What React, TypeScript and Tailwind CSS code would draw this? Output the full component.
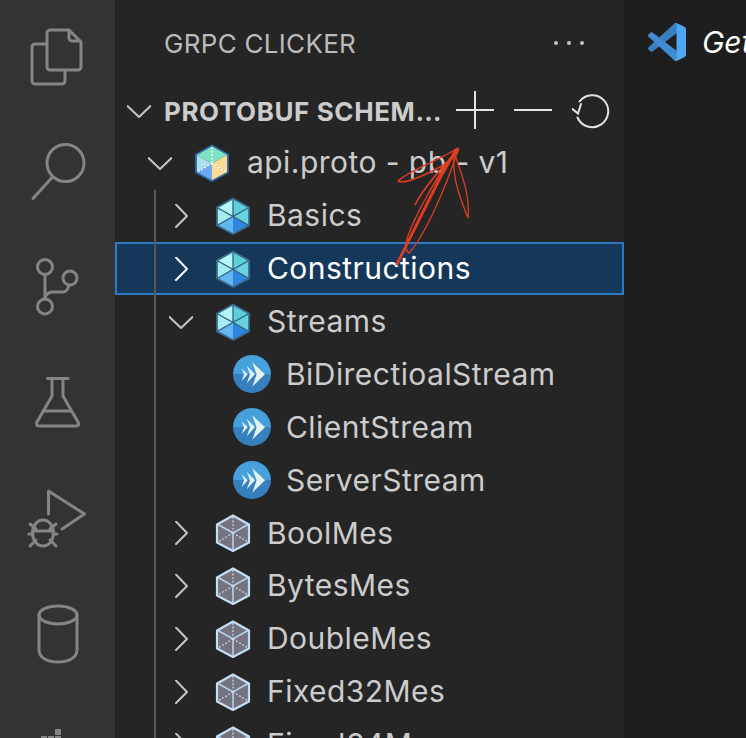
import React from "react";

const A = "#858585";

function ActivityIcon({ y, children }: { y: number; children: React.ReactNode }) {
  return (
    <div className="h-[116px] w-[115px] shrink-0">
      <svg width="115" height="116" viewBox={`0 ${y} 115 116`} fill="none" stroke={A} strokeWidth="3" strokeLinejoin="round" strokeLinecap="round">
        {children}
      </svg>
    </div>
  );
}

function ActivityBar() {
  return (
    <div className="flex w-[115px] shrink-0 flex-col bg-[#333333]">
      <ActivityIcon y={0}>
        <path d="M50 30H69L81 42V67a3 3 0 0 1-3 3H50a3 3 0 0 1-3-3V33a3 3 0 0 1 3-3z" />
        <path d="M69 30V38a3 3 0 0 0 3 3H80" strokeWidth="3" />
        <path d="M47 44H35a3 3 0 0 0-3 3V81a3 3 0 0 0 3 3H62a3 3 0 0 0 3-3V71" />
      </ActivityIcon>
      <ActivityIcon y={116}>
        <circle cx="65.5" cy="163" r="18.5" />
        <path d="M33 198.500L52 177.500" />
      </ActivityIcon>
      <ActivityIcon y={232}>
        <circle cx="45" cy="267" r="7.500" />
        <circle cx="45" cy="306.500" r="7.500" />
        <circle cx="70" cy="278" r="7" />
        <path d="M45 275V299" />
        <path d="M45 298c1-4 4-6 8-6h10c3 0 5-3 6-7" />
      </ActivityIcon>
      <ActivityIcon y={348}>
        <path d="M47.500 378.500H68" />
        <path d="M52 379V396L37 422Q35.500 426 39 426H76Q80 426 78 422L63 396V379" />
        <path d="M44 411H71" />
      </ActivityIcon>
      <ActivityIcon y={464}>
        <path d="M48.500 514V491L84.500 514L62 529" />
        <ellipse cx="43" cy="533" rx="10.500" ry="13" />
        <path d="M33 531H53" />
        <path d="M30 524L36 529M56 524L50 529M29 534H33M57 534H53M30 546L36 540M56 546L50 540" />
      </ActivityIcon>
      <ActivityIcon y={580}>
        <ellipse cx="58" cy="615" rx="19" ry="9" />
        <path d="M39 615V650C39 658 48 662 58 662S77 658 77 650V615" />
      </ActivityIcon>
      <ActivityIcon y={696}>
        <g fill={A} stroke="none">
          <rect x="55" y="729" width="6" height="6" />
          <rect x="41" y="736" width="6" height="6" />
          <rect x="48" y="736" width="6" height="6" />
          <rect x="55" y="736" width="6" height="6" />
        </g>
      </ActivityIcon>
    </div>
  );
}

function Chevron({ open, color = "#c5c5c5" }: { open?: boolean; color?: string }) {
  return (
    <svg width="24" height="24" viewBox="0 0 24 24" fill="none" stroke={color} strokeWidth="2" strokeLinecap="round" strokeLinejoin="round" className="shrink-0">
      {open ? <path d="M0.500 7L12 18L23.500 7" /> : <path d="M7 0.500L18 12L7 23" />}
    </svg>
  );
}

function ProtoIcon() {
  return (
    <svg width="36" height="38" viewBox="0 0 36 38" className="ml-[22px] shrink-0">
      <path d="M18 1.500L34 10.500L18 19.500L2 10.500Z" fill="#7fe3c3" />
      <path d="M2 10.500L18 19.500L2 28.500Z" fill="#a6e0ea" />
      <path d="M2 28.500L18 19.500V37Z" fill="#6ea8ee" />
      <path d="M34 10.500V28.500L18 19.500Z" fill="#ffdc96" />
      <path d="M34 28.500L18 37V19.500Z" fill="#ffdc96" />
      <path d="M18 3V19.500M18 19.500L3 28M18 19.500L33 28" stroke="#fff" strokeWidth="1.200" strokeDasharray="2 1.500" fill="none" />
      <path d="M18 1.500L34 10.500V28.500L18 37L2 28.500V10.500Z" stroke="#2d69a4" strokeWidth="1.800" fill="none" strokeLinejoin="round" />
    </svg>
  );
}

function ClassIcon() {
  return (
    <svg width="36" height="38" viewBox="0 0 36 38" className="ml-[22px] shrink-0">
      <path d="M18 19L18 1.500L2 10.500Z" fill="#b5f7f6" />
      <path d="M18 19L18 1.500L34 10.500Z" fill="#5fcfdc" />
      <path d="M18 19L2 10.500V28.500Z" fill="#a3ecf2" />
      <path d="M18 19L34 10.500V28.500Z" fill="#69d2dc" />
      <path d="M18 19L2 28.500L18 37Z" fill="#63b6f0" />
      <path d="M18 19L34 28.500L18 37Z" fill="#2f86e0" />
      <path d="M2 10.500L34 28.500M34 10.500L2 28.500M18 1.500V19" stroke="#35617f" strokeWidth="1.300" fill="none" />
      <path d="M18 1.500L34 10.500V28.500L18 37L2 28.500V10.500Z" stroke="#3a6d8c" strokeWidth="1.800" fill="none" strokeLinejoin="round" />
    </svg>
  );
}

function MessageIcon() {
  return (
    <svg width="36" height="38" viewBox="0 0 36 38" className="ml-[22px] shrink-0">
      <path d="M18 1.500L34 10.500V28.500L18 37L2 28.500V10.500Z" fill="#75737f" />
      <path d="M3 10.500L18 19L33 10.500M18 19V36" stroke="#b9d6ef" strokeWidth="1.500" fill="none" />
      <path d="M18 3V19M18 19L3 28M18 19L33 28" stroke="#c8dcee" strokeWidth="1.300" strokeDasharray="1.800 1.800" fill="none" />
      <path d="M18 1.500L34 10.500V28.500L18 37L2 28.500V10.500Z" stroke="#c4def4" strokeWidth="2.200" fill="none" strokeLinejoin="round" />
    </svg>
  );
}

function MethodIcon() {
  return (
    <svg width="38" height="38" viewBox="0 0 38 38" className="shrink-0">
      <path d="M0 19a19 19 0 0 1 38 0Z" fill="#46a0dc" />
      <path d="M0 19a19 19 0 0 0 38 0Z" fill="#3580bd" />
      <path d="M19.300 7.300L32 19.300L19.300 31.700L23.600 19.300Z" fill="#e2f2ee" />
      <path d="M13.700 10.700L22 19.300L13.700 28.300L17 19.300Z" fill="#e2f2ee" />
      <path d="M8.700 13.300L14.700 19.300L8.700 26L11 19.300Z" fill="#e2f2ee" />
    </svg>
  );
}

function Row({ className, children, selected }: { className: string; children: React.ReactNode; selected?: boolean }) {
  return (
    <div
      className={
        "flex h-[52.9px] shrink-0 items-center whitespace-nowrap text-[30px] tracking-[0.45px] " +
        (selected ? "bg-[#14375a] text-white outline-2 -outline-offset-2 outline-[#2f78c4] " : "text-[#cccccc] ") +
        className
      }
    >
      {children}
    </div>
  );
}

function ParentRow({ kind, label, open, selected }: { kind: "class" | "message"; label: string; open?: boolean; selected?: boolean }) {
  return (
    <Row className="pl-[54px]" selected={selected}>
      <Chevron open={open} color={selected ? "#ffffff" : "#c5c5c5"} />
      {kind === "class" ? <ClassIcon /> : <MessageIcon />}
      <span className="ml-[16px]">{label}</span>
    </Row>
  );
}

function MethodRow({ label }: { label: string }) {
  return (
    <Row className="pl-[118px]">
      <MethodIcon />
      <span className="ml-[15px]">{label}</span>
    </Row>
  );
}

function Sidebar() {
  return (
    <div className="relative flex w-[509px] shrink-0 flex-col bg-[#252526]">
      <div className="flex h-[86px] shrink-0 items-center justify-between pl-[49px] pr-[39px]">
        <span className="text-[26px] tracking-[0.3px] text-[#bbbbbb]">GRPC CLICKER</span>
        <svg width="32" height="6" viewBox="0 0 32 6" fill="#c5c5c5">
          <circle cx="3" cy="3" r="2" />
          <circle cx="16" cy="3" r="2" />
          <circle cx="29" cy="3" r="2" />
        </svg>
      </div>
      <div className="flex h-[50.4px] shrink-0 items-center pl-[12px]">
        <Chevron open />
        <span className="ml-[13px] w-[279px] truncate text-[26px] font-bold tracking-[0.6px] text-[#cccccc]">PROTOBUF SCHEMAS EXPLORER</span>
        <div className="mb-[2px] ml-[13px] flex items-center gap-[20px]">
          <svg width="38" height="38" viewBox="0 0 38 38" stroke="#dfe3e8" strokeWidth="2" className="shrink-0">
            <path d="M0 19H38M19 0V38" />
          </svg>
          <svg width="38" height="38" viewBox="0 0 38 38" stroke="#dfe3e8" strokeWidth="2" className="shrink-0">
            <path d="M0 19H38" />
          </svg>
          <svg width="38" height="38" viewBox="0 0 38 38" fill="none" stroke="#dfe3e8" strokeWidth="2" strokeLinecap="round" className="shrink-0">
            <path d="M7.500 10.500A16 16 0 1 1 5.500 26.500" />
            <path d="M0.500 18L6 22.500L9 13" />
          </svg>
        </div>
      </div>
      <Row className="pl-[33px]">
        <Chevron open />
        <ProtoIcon />
        <span className="ml-[17px]">api.proto - pb - v1</span>
      </Row>
      <ParentRow kind="class" label="Basics" />
      <ParentRow kind="class" label="Constructions" selected />
      <ParentRow kind="class" label="Streams" open />
      <MethodRow label="BiDirectioalStream" />
      <MethodRow label="ClientStream" />
      <MethodRow label="ServerStream" />
      <ParentRow kind="message" label="BoolMes" />
      <ParentRow kind="message" label="BytesMes" />
      <ParentRow kind="message" label="DoubleMes" />
      <ParentRow kind="message" label="Fixed32Mes" />
      <ParentRow kind="message" label="Fixed64Mes" />
      <div className="absolute bottom-0 left-[39px] top-[190px] w-[2px] bg-[#585858]" />
    </div>
  );
}

function Editor() {
  return (
    <div className="flex min-w-0 flex-1 items-start overflow-hidden bg-[#1e1e1e]">
      <div className="flex h-[84px] items-center whitespace-nowrap pl-[24px]">
        <svg width="38" height="38" viewBox="0 0 100 100" className="shrink-0">
          <path d="M96.4614 10.7962L75.8569 0.875542C73.4719 -0.272773 70.6217 0.211611 68.75 2.08333L1.29858 63.5832C-0.515693 65.2373 -0.513607 68.0937 1.30308 69.7452L6.81272 74.754C8.29793 76.1042 10.5347 76.2036 12.1338 74.9905L93.3609 13.3699C96.086 11.3026 100 13.2462 100 16.6667V16.4275C100 14.0265 98.6246 11.8378 96.4614 10.7962Z" fill="#3a7fbe" />
          <path d="M96.4614 89.2038L75.8569 99.1245C73.4719 100.273 70.6217 99.7884 68.75 97.9167L1.29858 36.4168C-0.515693 34.7627 -0.513607 31.9063 1.30308 30.2548L6.81272 25.246C8.29793 23.8958 10.5347 23.7964 12.1338 25.0095L93.3609 86.6301C96.086 88.6974 100 86.7538 100 83.3333V83.5725C100 85.9735 98.6246 88.1622 96.4614 89.2038Z" fill="#418bd0" />
          <path d="M75.8578 99.1263C73.4721 100.274 70.6219 99.7885 68.75 97.9166C71.0564 100.223 75 98.5895 75 95.3278V4.67213C75 1.41039 71.0564 -0.223106 68.75 2.08329C70.6219 0.211402 73.4721 -0.273666 75.8578 0.873633L96.4587 10.7807C98.6234 11.8217 100 14.0112 100 16.4132V83.5871C100 85.9891 98.6234 88.1786 96.4586 89.2196L75.8578 99.1263Z" fill="#4fa6f2" />
        </svg>
        <span className="ml-[16px] text-[30px] italic text-white">Get Started</span>
      </div>
    </div>
  );
}

function Scribble() {
  return (
    <svg width="746" height="738" viewBox="0 0 746 738" fill="none" stroke="#e23c20" strokeLinecap="round" strokeLinejoin="round" className="pointer-events-none absolute left-0 top-0">
      <path d="M398 181C410 170 440 160 458 148C460 152 452 160 440 167C425 175 405 185 398 181Z" strokeWidth="1.500" />
      <path d="M397 264L440 178L456 150" strokeWidth="2.800" />
      <path d="M409 253C425 235 445 190 458 150" strokeWidth="1.300" />
      <path d="M409 253C400 248 412 225 422 205C430 190 445 165 456 150" strokeWidth="1.300" />
      <path d="M415 205C425 185 445 165 458 150" strokeWidth="1.500" />
      <path d="M455 155C462 175 470 195 468 218C463 205 452 180 454 158" strokeWidth="1.300" />
    </svg>
  );
}

export default function App() {
  return (
    <div className="relative flex h-[738px] w-[746px] overflow-hidden font-[Inter,sans-serif]">
      <ActivityBar />
      <Sidebar />
      <Editor />
      <Scribble />
    </div>
  );
}
